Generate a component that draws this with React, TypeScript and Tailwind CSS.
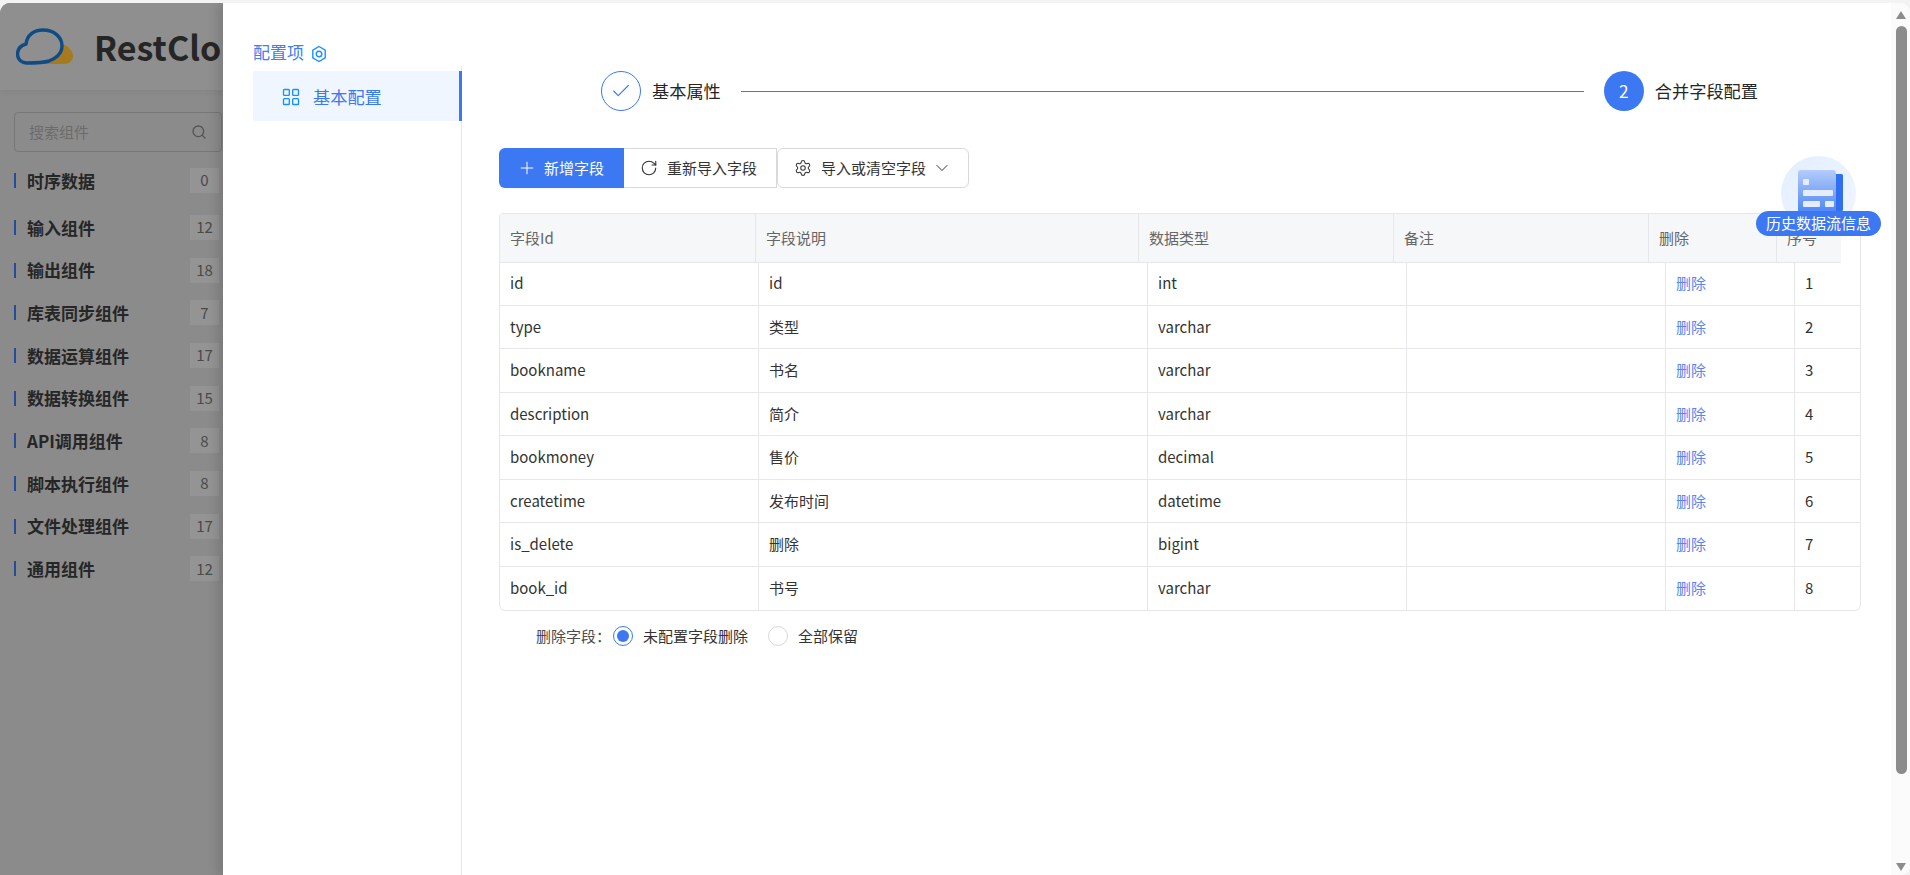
import { Check, ChevronDown, LayoutGrid, Plus, RotateCw, Search, Settings } from "lucide-react";

const groups = [
  { name: "时序数据", count: 0 },
  { name: "输入组件", count: 12 },
  { name: "输出组件", count: 18 },
  { name: "库表同步组件", count: 7 },
  { name: "数据运算组件", count: 17 },
  { name: "数据转换组件", count: 15 },
  { name: "API调用组件", count: 8 },
  { name: "脚本执行组件", count: 8 },
  { name: "文件处理组件", count: 17 },
  { name: "通用组件", count: 12 },
];

const fields = [
  { id: "id", desc: "id", type: "int" },
  { id: "type", desc: "类型", type: "varchar" },
  { id: "bookname", desc: "书名", type: "varchar" },
  { id: "description", desc: "简介", type: "varchar" },
  { id: "bookmoney", desc: "售价", type: "decimal" },
  { id: "createtime", desc: "发布时间", type: "datetime" },
  { id: "is_delete", desc: "删除", type: "bigint" },
  { id: "book_id", desc: "书号", type: "varchar" },
];

const headers = ["字段Id", "字段说明", "数据类型", "备注", "删除", "序号"];

const Logo = () => (
  <svg width="58" height="40" viewBox="0 0 58 40" fill="none" className="shrink-0">
    <path d="M28 37C34 35 42 30 46.5 17C52 19 57 24 57 29C57 34 53 37 48 37Z" fill="#a67a1e" />
    <path
      d="M11 36C5 36 1.5 32 1.5 27C1.5 22 5 18.5 10 17C11 8 18 3 27 3C38 3 46 10 46 19C46 27 39 32 33 34C28 35.5 20 36 11 36Z"
      stroke="#0f4c85"
      strokeWidth="3.4"
    />
  </svg>
);

const LeftPanel = () => (
  <aside className="w-[223px] shrink-0 overflow-hidden bg-[#8b8b8b]">
    <div className="flex h-[87px] items-center bg-[#8f8f8f] pl-[16px] shadow-[0_2px_6px_rgba(0,0,0,0.05)]">
      <Logo />
      <span className="ml-[20px] text-[34px] font-semibold whitespace-nowrap text-[#262626]">RestCloud</span>
    </div>
    <div className="pt-[22px] pl-[14px]">
      <div className="flex h-[40px] w-[208px] items-center justify-between rounded border border-[#777777] pr-[14px] pl-[14px] text-[15px] text-[#6b6b6b]">
        搜索组件
        <Search size={16} className="text-[#555555]" />
      </div>
      <div className="mt-[16px]">
        {groups.map((g, i) => (
          <div key={g.name} className={i === 0 ? "mb-[22px] flex h-[25px] items-center" : "mb-[17.67px] flex h-[25px] items-center"}>
            <span className="h-[15px] w-[2px] bg-[#264a9c]" />
            <span className="ml-[11px] text-[17px] font-bold whitespace-nowrap text-[#262626]">{g.name}</span>
            <span className="mr-[4px] ml-auto flex h-[25px] w-[29px] items-center justify-center bg-[#949494] text-[15px] text-[#4a4a4a]">
              {g.count}
            </span>
          </div>
        ))}
      </div>
    </div>
  </aside>
);

const ConfigNav = () => (
  <div className="flex w-[239px] shrink-0 flex-col">
    <div className="flex h-[63px] items-end pb-[2px] pl-[30px] text-[17px] leading-[24px] text-[#3f80f2]">
      配置项
      <svg width="16" height="18" viewBox="0 0 16 18" fill="none" stroke="#1890ff" strokeWidth="1.4" className="mb-[1px] ml-[7px]">
        <path d="M8 1.5l6.2 3.6v7.8L8 16.5l-6.2-3.6V5.1z" />
        <circle cx="8" cy="9" r="2.8" />
      </svg>
    </div>
    <div className="flex-1 border-r border-[#e5e7eb] pt-[5px] pl-[30px]">
      <div className="-mr-px flex h-[50px] items-center border-r-[3px] border-[#3b78f2] bg-[#eff6ff] pt-[2px] pl-[28px] text-[17.2px] text-[#3b78f2]">
        <LayoutGrid size={20} strokeWidth={1.6} className="text-[#1890ff]" />
        <span className="ml-[12px]">基本配置</span>
      </div>
    </div>
  </div>
);

const Steps = () => (
  <div className="ml-[102px] flex h-[40px] w-[1157px] items-center text-[17.2px] text-[#262626]">
    <span className="flex h-[40px] w-[40px] items-center justify-center rounded-full border border-[#3b78f2] text-[#3b78f2]">
      <Check size={22} strokeWidth={1.2} />
    </span>
    <span className="ml-[11px]">基本属性</span>
    <span className="mx-[20px] h-px flex-1 bg-[#3b78f2]" />
    <span className="flex h-[40px] w-[40px] items-center justify-center rounded-full bg-[#3b78f2] text-white">2</span>
    <span className="ml-[11px]">合并字段配置</span>
  </div>
);

const Toolbar = () => (
  <div className="mt-[37px] flex h-[40px] text-[15px] text-[#333333]">
    <button className="flex w-[125px] items-center rounded-l-md bg-[#3b78f2] pl-[18px] text-white shadow-[0_2px_0_rgba(0,0,0,0.02)]">
      <Plus size={20} strokeWidth={1.2} />
      <span className="ml-[7px]">新增字段</span>
    </button>
    <button className="flex w-[153px] items-center border-y border-r border-[#d9d9d9] pl-[16px]">
      <RotateCw size={18} strokeWidth={1.5} />
      <span className="ml-[9px]">重新导入字段</span>
    </button>
    <button className="flex w-[192px] items-center rounded-md border border-[#d9d9d9] pl-[16px]">
      <Settings size={18} strokeWidth={1.4} />
      <span className="ml-[9px]">导入或清空字段</span>
      <ChevronDown size={20} strokeWidth={1.2} className="ml-[6px]" />
    </button>
  </div>
);

const FieldTable = () => (
  <div className="mt-[25px] w-[1362px] overflow-hidden rounded-b-md rounded-t-sm border border-[#e5e7eb] text-[15px] text-[#333333]">
    <div className="grid h-[48.5px] w-[1341px] grid-cols-[256px_383px_255px_255px_128px_64px] border-b border-[#e5e7eb] bg-[#f6f7f9] text-[#666666]">
      {headers.map((h) => (
        <div key={h} className="flex items-center border-r border-[#e5e7eb] pl-[10px] last:border-r-0">
          {h}
        </div>
      ))}
    </div>
    {fields.map((f, i) => (
      <div
        key={f.id}
        className="grid h-[43.45px] grid-cols-[259px_389px_259px_259px_129px_65px] border-b border-[#e5e7eb] last:border-b-0"
      >
        <div className="flex items-center border-r border-[#e5e7eb] pl-[10px]">{f.id}</div>
        <div className="flex items-center border-r border-[#e5e7eb] pl-[10px]">{f.desc}</div>
        <div className="flex items-center border-r border-[#e5e7eb] pl-[10px]">{f.type}</div>
        <div className="flex items-center border-r border-[#e5e7eb] pl-[10px]" />
        <div className="flex items-center border-r border-[#e5e7eb] pl-[10px] text-[#5b85f0]">删除</div>
        <div className="flex items-center pl-[10px]">{i + 1}</div>
      </div>
    ))}
  </div>
);

const DeleteOption = () => (
  <div className="mt-[15px] flex h-[20px] items-center pl-[37px] text-[15px] text-[#333333]">
    <span className="w-[77px] text-[#4b4b4b]">删除字段：</span>
    <span className="flex h-[20px] w-[20px] items-center justify-center rounded-full border border-[#3b78f2]">
      <span className="h-[12px] w-[12px] rounded-full bg-[#3b78f2]" />
    </span>
    <span className="ml-[10px]">未配置字段删除</span>
    <span className="ml-[20px] h-[20px] w-[20px] rounded-full border border-[#d9d9d9]" />
    <span className="ml-[10px]">全部保留</span>
  </div>
);

const HistoryBadge = () => (
  <div className="absolute top-[153px] left-[1294px] flex w-[125px] flex-col items-center">
    <div className="-mb-[20px] h-[75px] w-[75px] rounded-full bg-gradient-to-br from-[#e2eeff] to-[#f1f6ff] pt-[14px] pl-[17px]">
      <svg width="45" height="41" viewBox="0 0 45 41">
        <defs>
          <linearGradient id="docFill" x1="0" y1="0" x2="0" y2="1">
            <stop offset="0" stopColor="#b4ccfb" />
            <stop offset="1" stopColor="#5189f4" />
          </linearGradient>
        </defs>
        <rect x="35" y="4" width="10" height="37" rx="1.5" fill="#3070f0" />
        <path d="M3 0h32a3 3 0 0 1 3 3v38H0V3a3 3 0 0 1 3-3z" fill="url(#docFill)" />
        <rect x="5" y="9" width="6" height="6" rx="1" fill="#e3edfe" />
        <rect x="5" y="20" width="30" height="6" rx="1" fill="#e3edfe" />
        <rect x="5" y="31" width="17" height="6" rx="1" fill="#e3edfe" />
        <rect x="27" y="31" width="9" height="6" rx="1" fill="#e3edfe" />
      </svg>
    </div>
    <div className="relative flex h-[25px] w-[125px] items-center justify-center rounded-full bg-[#3b78f2] text-[15px] text-white">
      历史数据流信息
    </div>
  </div>
);

const Scrollbar = () => (
  <div className="flex w-[19px] shrink-0 flex-col items-center bg-[#fbfbfb] pl-[1px] pt-[8px] pb-[4px]">
    <svg width="10" height="8" viewBox="0 0 10 8" fill="#8c8c8c">
      <path d="M5 0l5 8H0z" />
    </svg>
    <div className="mt-[7px] h-[748px] w-[11px] rounded-full bg-[#8c8c8c]" />
    <svg width="10" height="8" viewBox="0 0 10 8" fill="#8c8c8c" className="mt-auto">
      <path d="M5 8L0 0h10z" />
    </svg>
  </div>
);

export default function App() {
  return (
    <div className="h-[875px] w-[1910px] overflow-hidden bg-[#f3f3f3] pt-[3px] font-['Noto_Sans_CJK_SC','Noto_Sans',sans-serif]">
      <div className="flex h-full overflow-hidden rounded-t-[10px] rounded-br-[10px]">
        <LeftPanel />
        <div className="relative flex flex-1 bg-white shadow-[-6px_0_10px_rgba(0,0,0,0.12)]">
          <ConfigNav />
          <main className="relative min-w-0 flex-1 pt-[68px] pl-[37px]">
            <Steps />
            <Toolbar />
            <FieldTable />
            <DeleteOption />
            <HistoryBadge />
          </main>
          <Scrollbar />
        </div>
      </div>
    </div>
  );
}
